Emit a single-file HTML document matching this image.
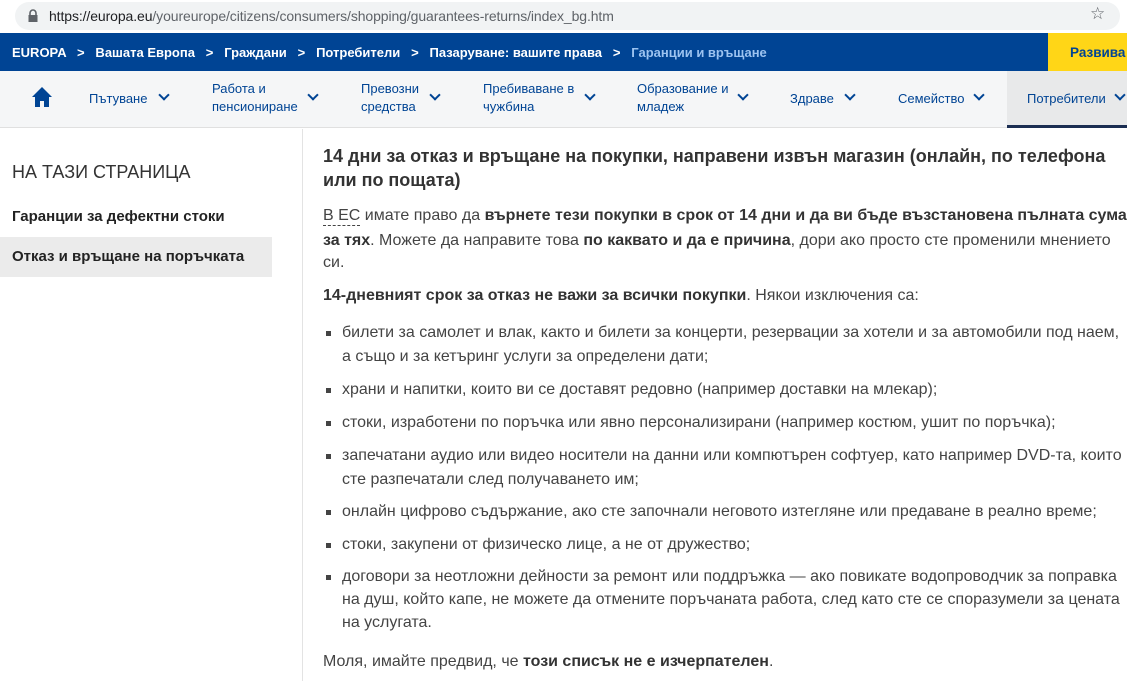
<!DOCTYPE html>
<html><head><meta charset="utf-8"><style>
*{margin:0;padding:0;box-sizing:border-box}
body{width:1127px;height:681px;overflow:hidden;background:#fff;font-family:"Liberation Sans",Arial,sans-serif;position:relative}
.a{position:absolute;white-space:nowrap}
#url{left:15px;top:2px;width:1105px;height:28px;background:#f1f3f4;border-radius:14px}
#bc{left:0;top:33px;width:1127px;height:38px;background:#004494}
#nav{left:0;top:71px;width:1127px;height:57px;background:#f5f6f7;border-bottom:1px solid #e0e0e0}
.n{position:absolute;color:#004494;font-size:13px;line-height:18px;white-space:nowrap}
.ch{position:absolute;width:8px;height:8px;border-right:2px solid #004494;border-bottom:2px solid #004494;transform:rotate(45deg)}
.t{position:absolute;white-space:nowrap;font-size:16px;line-height:24px;color:#444;left:323px}
.t b{color:#333}
.li{left:342px}
.bu{position:absolute;left:326px;width:5px;height:5px;background:#444}
</style></head><body>
<div class="a" id="url"></div>
<svg class="a" style="left:27px;top:9px" width="12" height="13" viewBox="0 0 12 13"><path d="M3 6V4a3 3 0 0 1 6 0v2" fill="none" stroke="#5f6368" stroke-width="1.6"/><rect x="1.5" y="6" width="9" height="7" fill="#5f6368"/></svg>
<div class="a" style="left:49px;top:8px;font-size:14px;color:#202124;letter-spacing:-0.1px">https://<span style="color:#202124">europa.eu</span><span style="color:#5f6368">/youreurope/citizens/consumers/shopping/guarantees-returns/index_bg.htm</span></div>
<div class="a" style="left:1090px;top:4px;font-size:17px;color:#5f6368">☆</div>
<div class="a" id="bc"></div>
<div class="a" style="left:12px;top:45px;font-size:13px;font-weight:bold;color:#fff">EUROPA &nbsp;&nbsp;&gt;&nbsp;&nbsp; Вашата Европа &nbsp;&nbsp;&gt;&nbsp;&nbsp; Граждани &nbsp;&nbsp;&gt;&nbsp;&nbsp; Потребители &nbsp;&nbsp;&gt;&nbsp;&nbsp; Пазаруване: вашите права &nbsp;&nbsp;&gt;&nbsp;&nbsp; <span style="color:#9cc3f0">Гаранции и връщане</span></div>
<div class="a" style="left:1048px;top:33px;width:79px;height:38px;background:#ffd617;color:#004494;font-weight:bold;font-size:13.5px;padding:12px 0 0 22px;overflow:hidden">Развива</div>
<div class="a" id="nav"></div>
<div class="a" style="left:1007px;top:71px;width:120px;height:57px;background:#e8e9ea;border-bottom:3px solid #1b2e52"></div>
<svg class="a" style="left:31px;top:86px" width="22" height="22" viewBox="0 0 22 22"><path d="M11 1L1 11h3v10h5v-6h4v6h5V11h3z" fill="#004494"/></svg>
<div class="n" style="left:89px;top:90px">Пътуване</div><div class="ch" style="left:160px;top:91px"></div>
<div class="n" style="left:212px;top:80px">Работа и<br>пенсиониране</div><div class="ch" style="left:309px;top:91px"></div>
<div class="n" style="left:361px;top:80px">Превозни<br>средства</div><div class="ch" style="left:431px;top:91px"></div>
<div class="n" style="left:483px;top:80px">Пребиваване в<br>чужбина</div><div class="ch" style="left:586px;top:91px"></div>
<div class="n" style="left:637px;top:80px">Образование и<br>младеж</div><div class="ch" style="left:739px;top:91px"></div>
<div class="n" style="left:790px;top:90px">Здраве</div><div class="ch" style="left:846px;top:91px"></div>
<div class="n" style="left:898px;top:90px">Семейство</div><div class="ch" style="left:975px;top:91px"></div>
<div class="n" style="left:1027px;top:90px">Потребители</div><div class="ch" style="left:1116px;top:91px"></div>
<div class="a" style="left:302px;top:129px;width:1px;height:552px;background:#e3e3e3"></div>
<div class="a" style="left:12px;top:162px;font-size:18px;color:#333">НА ТАЗИ СТРАНИЦА</div>
<div class="a" style="left:12px;top:208px;font-size:15px;font-weight:bold;color:#222">Гаранции за дефектни стоки</div>
<div class="a" style="left:0;top:237px;width:272px;height:40px;background:#ebebeb"></div>
<div class="a" style="left:12px;top:248px;font-size:15px;font-weight:bold;color:#222">Отказ и връщане на поръчката</div>
<div class="t" style="top:144px;font-size:18px;font-weight:bold;color:#333">14 дни за отказ и връщане на покупки, направени извън магазин (онлайн, по телефона</div>
<div class="t" style="top:168px;font-size:18px;font-weight:bold;color:#333">или по пощата)</div>
<div class="t" style="top:204px"><span style="border-bottom:1px dashed #444;line-height:18px;display:inline-block">В ЕС</span> имате право да <b>върнете тези покупки в срок от 14 дни и да ви бъде възстановена пълната сума</b></div>
<div class="t" style="top:229px"><b>за тях</b>. Можете да направите това <b>по каквато и да е причина</b>, дори ако просто сте променили мнението</div>
<div class="t" style="top:251px">си.</div>
<div class="t" style="top:284px"><b>14-дневният срок за отказ не важи за всички покупки</b>. Някои изключения са:</div>
<div class="bu" style="top:331px"></div><div class="t li" style="top:321px">билети за самолет и влак, както и билети за концерти, резервации за хотели и за автомобили под наем,</div>
<div class="t li" style="top:345px">а също и за кетъринг услуги за определени дати;</div>
<div class="bu" style="top:388px"></div><div class="t li" style="top:378px">храни и напитки, които ви се доставят редовно (например доставки на млекар);</div>
<div class="bu" style="top:421px"></div><div class="t li" style="top:411px">стоки, изработени по поръчка или явно персонализирани (например костюм, ушит по поръчка);</div>
<div class="bu" style="top:454px"></div><div class="t li" style="top:444px">запечатани аудио или видео носители на данни или компютърен софтуер, като например DVD-та, които</div>
<div class="t li" style="top:468px">сте разпечатали след получаването им;</div>
<div class="bu" style="top:510px"></div><div class="t li" style="top:500px">онлайн цифрово съдържание, ако сте започнали неговото изтегляне или предаване в реално време;</div>
<div class="bu" style="top:543px"></div><div class="t li" style="top:533px">стоки, закупени от физическо лице, а не от дружество;</div>
<div class="bu" style="top:575px"></div><div class="t li" style="top:565px">договори за неотложни дейности за ремонт или поддръжка — ако повикате водопроводчик за поправка</div>
<div class="t li" style="top:588px">на душ, който капе, не можете да отмените поръчаната работа, след като сте се споразумели за цената</div>
<div class="t li" style="top:611px">на услугата.</div>
<div class="t" style="top:650px">Моля, имайте предвид, че <b>този списък не е изчерпателен</b>.</div>
</body></html>
